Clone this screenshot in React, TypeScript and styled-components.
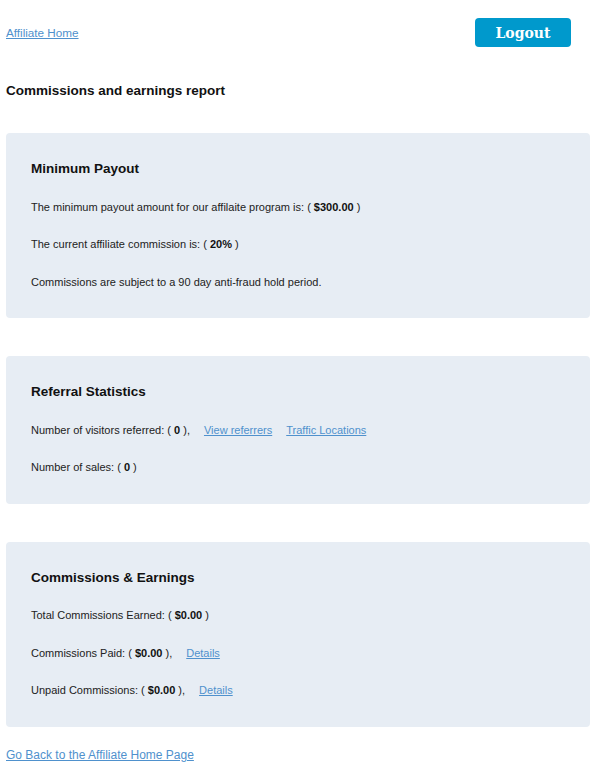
import type { ReactNode } from 'react';
import styled, { createGlobalStyle } from 'styled-components';

const GlobalStyle = createGlobalStyle`
  html, body {
    margin: 0;
    padding: 0;
    background: #ffffff;
  }
  body {
    font-family: 'Liberation Sans', Arial, sans-serif;
    font-size: 11px;
    color: #222222;
  }
`;

const Page = styled.div`
  padding: 18px 10px 0 6px;
  border-top: 2px solid #f7f7f7;
  margin-top: -2px;
`;

const TopBar = styled.div`
  display: flex;
  align-items: center;
  justify-content: space-between;
  padding-right: 19px;
  height: 29px;
`;

const Link = styled.a<{ $size?: number }>`
  color: #4f91cd;
  text-decoration: underline;
  font-size: ${({ $size }) => $size ?? 11}px;
  line-height: 14px;
`;

const InlineLink = styled(Link)`
  margin-left: 14px;
`;

const LogoutButton = styled.button`
  width: 96px;
  height: 29px;
  border: none;
  border-radius: 4px;
  background: #0099cc;
  color: #ffffff;
  font-family: 'DejaVu Serif', 'Liberation Serif', serif;
  font-weight: bold;
  font-size: 14px;
  padding: 0;
  cursor: pointer;
`;

const PageTitle = styled.h1`
  margin: 36px 0 34px;
  font-size: 13.5px;
  line-height: 16px;
  font-weight: bold;
  color: #111111;
`;

const Panels = styled.div`
  display: flex;
  flex-direction: column;
  gap: 38px;
`;

const Panel = styled.section`
  display: flex;
  flex-direction: column;
  gap: 22.5px;
  padding: 28px 25px 28.5px;
  background: #e7edf4;
  border-radius: 4px;
`;

const PanelTitle = styled.h2`
  margin: 0;
  font-size: 13.5px;
  line-height: 16px;
  font-weight: bold;
  color: #111111;
`;

const Row = styled.div`
  line-height: 15px;
  color: #222222;
`;

const Value = styled.b`
  font-weight: bold;
  color: #111111;
`;

const Footer = styled.div`
  padding: 21px 0 13px;
`;

type Line = { id: string; content: ReactNode };

const payoutLines: Line[] = [
  {
    id: 'min',
    content: (
      <>
        The minimum payout amount for our affilaite program is: ( <Value>$300.00</Value> )
      </>
    ),
  },
  {
    id: 'rate',
    content: (
      <>
        The current affiliate commission is: ( <Value>20%</Value> )
      </>
    ),
  },
  { id: 'hold', content: <>Commissions are subject to a 90 day anti-fraud hold period.</> },
];

const referralLines: Line[] = [
  {
    id: 'visitors',
    content: (
      <>
        Number of visitors referred: ( <Value>0</Value> ),
        <InlineLink href="#">View referrers</InlineLink>
        <InlineLink href="#">Traffic Locations</InlineLink>
      </>
    ),
  },
  {
    id: 'sales',
    content: (
      <>
        Number of sales: ( <Value>0</Value> )
      </>
    ),
  },
];

const earningLines: Line[] = [
  {
    id: 'total',
    content: (
      <>
        Total Commissions Earned: ( <Value>$0.00</Value> )
      </>
    ),
  },
  {
    id: 'paid',
    content: (
      <>
        Commissions Paid: ( <Value>$0.00</Value> ),
        <InlineLink href="#">Details</InlineLink>
      </>
    ),
  },
  {
    id: 'unpaid',
    content: (
      <>
        Unpaid Commissions: ( <Value>$0.00</Value> ),
        <InlineLink href="#">Details</InlineLink>
      </>
    ),
  },
];

const Section = ({ title, lines }: { title: string; lines: Line[] }) => (
  <Panel>
    <PanelTitle>{title}</PanelTitle>
    {lines.map((line) => (
      <Row key={line.id}>{line.content}</Row>
    ))}
  </Panel>
);

export default function App() {
  return (
    <>
      <GlobalStyle />
      <Page>
        <TopBar>
          <Link href="#" $size={11.7}>
            Affiliate Home
          </Link>
          <LogoutButton type="button">Logout</LogoutButton>
        </TopBar>

        <PageTitle>Commissions and earnings report</PageTitle>

        <Panels>
          <Section title="Minimum Payout" lines={payoutLines} />
          <Section title="Referral Statistics" lines={referralLines} />
          <Section title="Commissions & Earnings" lines={earningLines} />
        </Panels>

        <Footer>
          <Link href="#" $size={12}>
            Go Back to the Affiliate Home Page
          </Link>
        </Footer>
      </Page>
    </>
  );
}
